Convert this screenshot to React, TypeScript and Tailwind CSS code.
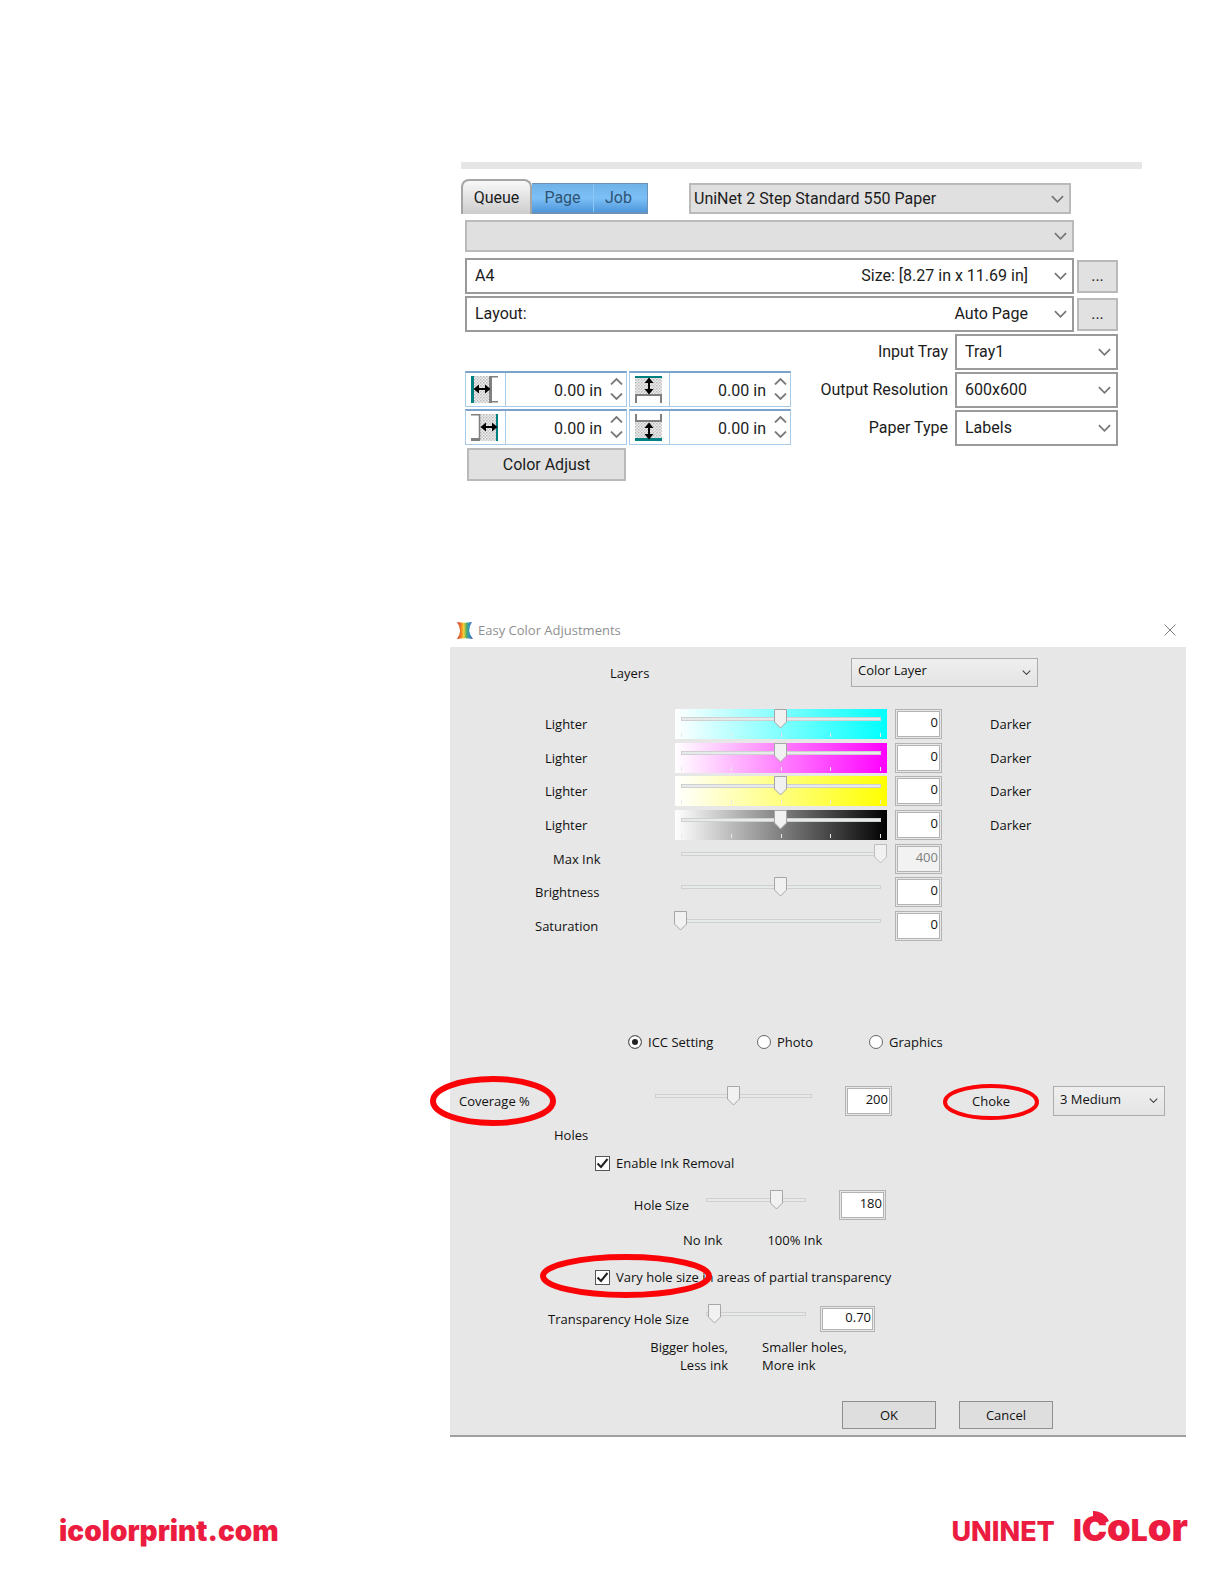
import { useState } from 'react';
import type { ReactNode } from 'react';

function Chevron({ className = '' }: { className?: string }) {
  return (
    <svg
      className={`pointer-events-none absolute ${className}`}
      fill="none"
      stroke="currentColor"
      strokeWidth={1.8}
      viewBox="0 0 14 8"
    >
      <path d="M1 1l6 6 6-6" />
    </svg>
  );
}

interface ComboProps {
  label: string;
  value: string;
  className?: string;
  detail?: string;
  disabled?: boolean;
}

function Combo({ label, value, className = '', detail, disabled = false }: ComboProps) {
  return (
    <div className={`relative flex items-center ${className}`}>
      <select
        aria-label={label}
        disabled={disabled}
        className="h-full w-full min-w-0 flex-1 appearance-none bg-transparent outline-none"
      >
        <option>{value}</option>
      </select>
      {detail && <span className="mr-[44px] shrink-0">{detail}</span>}
      <Chevron className="right-[5px] h-[8px] w-[13px] text-[#747474]" />
    </div>
  );
}

type Side = 'left' | 'right' | 'top' | 'bottom';

function MarginIcon({ side }: { side: Side }) {
  const vertical = side === 'top' || side === 'bottom';
  return (
    <svg className="h-[27px] w-[27px]" viewBox="0 0 27 27" fill="none">
      <defs>
        <pattern id={`dots-${side}`} width="3" height="3" patternUnits="userSpaceOnUse">
          <rect width="3" height="3" fill="#efefef" />
          <rect width="1.5" height="1.5" fill="#b9b9b9" />
          <rect x="1.5" y="1.5" width="1.5" height="1.5" fill="#c9c9c9" />
        </pattern>
      </defs>
      {side === 'left' && (
        <>
          <rect x="3" width="15" height="27" fill={`url(#dots-${side})`} />
          <path d="M1.5 0v27" stroke="#008080" strokeWidth="3" />
          <path d="M27 .75h-7.500v25h7.500" stroke="#808080" strokeWidth="1.500" />
          <path d="M19.500 0v27" stroke="#808080" strokeWidth="3" />
        </>
      )}
      {side === 'right' && (
        <>
          <rect x="9" width="16" height="27" fill={`url(#dots-${side})`} />
          <path d="M26 0v27" stroke="#008080" strokeWidth="2" />
          <path d="M0 .75h8.500v25" stroke="#808080" strokeWidth="1.500" />
          <path d="M0 25.500h9" stroke="#808080" strokeWidth="3" />
        </>
      )}
      {side === 'top' && (
        <>
          <rect width="27" height="18" fill={`url(#dots-${side})`} />
          <path d="M0 1h27" stroke="#008080" strokeWidth="2" />
          <path d="M1 27v-8h25v8" stroke="#808080" strokeWidth="2" />
        </>
      )}
      {side === 'bottom' && (
        <>
          <rect y="8" width="27" height="17" fill={`url(#dots-${side})`} />
          <path d="M0 25.5h27" stroke="#008080" strokeWidth="3" />
          <path d="M1 0v7h25V0" stroke="#808080" strokeWidth="2" />
        </>
      )}
      {vertical ? (
        <g transform={side === 'top' ? 'translate(14 10)' : 'translate(14 17)'} fill="#000">
          <rect x="-1" y="-6" width="2" height="12" />
          <path d="M-4.500-3L0-8.500 4.500-3zM-4.500 3L0 8.500 4.500 3z" />
        </g>
      ) : (
        <g transform={side === 'left' ? 'translate(11 13)' : 'translate(18 13)'} fill="#000">
          <rect x="-6" y="-1" width="12" height="2" />
          <path d="M-3-4.500L-8.500 0-3 4.500zM3-4.500L8.500 0 3 4.500z" />
        </g>
      )}
    </svg>
  );
}

function MarginField({ side }: { side: Side }) {
  const [value, setValue] = useState('0.00 in');
  return (
    <div className="flex h-9 w-[162px] border border-[#a9cbea] border-t-2 border-t-[#7ba2c8] bg-white">
      <div className="flex w-10 shrink-0 items-center justify-center border-r border-[#a9cbea] pr-[2px]">
        <MarginIcon side={side} />
      </div>
      <input
        aria-label={`${side} margin`}
        value={value}
        onChange={(e) => setValue(e.target.value)}
        className="w-full min-w-0 flex-1 pt-[2px] text-right outline-none"
      />
      <div className="flex w-6 shrink-0 flex-col items-center justify-center gap-[8px] pb-[2px] pl-[5px] text-[#7a7a7a]">
        <button type="button" aria-label={`Increase ${side} margin`} className="block">
          <svg className="block h-[7px] w-[13px]" viewBox="0 0 13 7" fill="none" stroke="currentColor" strokeWidth={1.8}>
            <path d="M1 6.500l5.500-5.500 5.500 5.500" />
          </svg>
        </button>
        <button type="button" aria-label={`Decrease ${side} margin`} className="block">
          <svg className="block h-[7px] w-[13px]" viewBox="0 0 13 7" fill="none" stroke="currentColor" strokeWidth={1.8}>
            <path d="M1 .5l5.500 5.500 5.500-5.500" />
          </svg>
        </button>
      </div>
    </div>
  );
}

const trays = [
  { label: 'Input Tray', value: 'Tray1' },
  { label: 'Output Resolution', value: '600x600' },
  { label: 'Paper Type', value: 'Labels' },
];

const grayCombo = 'border-2 border-[#bababa] bg-[#e0e0e0]';
const whiteCombo = 'border-2 border-[#9a9a9a] bg-white';
const grayButton = 'border-2 border-[#b9b9b9] bg-[#e1e1e1]';

function QueuePanel() {
  return (
    <section className="pr-[82px] pl-[461px] font-[Roboto,sans-serif] text-[16px] text-[#1c1c1c]">
      <div className="h-[7px] bg-[#e6e6e6]" />
      <div className="mt-[10px] flex items-end pr-[71px]">
        <div className="flex items-end" role="tablist">
          <button
            type="button"
            role="tab"
            aria-selected
            className="h-[35px] w-[71px] rounded-t-lg border-2 border-b-0 border-[#a5a5a5] bg-linear-to-b from-[#f8f8f8] to-[#cdcdcd]"
          >
            Queue
          </button>
          <div className="flex h-[31px] border-t border-r border-b-2 border-[#6c92b5] bg-linear-to-b from-[#6fb2e8] via-[#7cc0f7] to-[#4f97dc] text-[#2f5373]">
            <button type="button" role="tab" className="w-[62px] border-r border-[#8cc8f6]">
              Page
            </button>
            <button type="button" role="tab" className="w-[53px] pr-1">
              Job
            </button>
          </div>
        </div>
        <Combo
          label="Queue"
          value="UniNet 2 Step Standard 550 Paper"
          className={`ml-[41px] h-[31px] flex-1 pl-[3px] ${grayCombo}`}
        />
      </div>
      <div className="pr-6 pl-1">
        <Combo label="Preset" value="" disabled className={`mt-[6px] mr-11 h-8 ${grayCombo}`} />
        <div className="mt-[6px] flex items-center gap-[3px]">
          <Combo
            label="Paper"
            value="A4"
            detail="Size: [8.27 in x 11.69 in]"
            className={`h-9 flex-1 pl-2 ${whiteCombo}`}
          />
          <button type="button" aria-label="Paper options" className={`h-[33px] w-[41px] ${grayButton}`}>
            ...
          </button>
        </div>
        <div className="mt-[2px] flex items-center gap-[3px]">
          <Combo label="Layout" value="Layout:" detail="Auto Page" className={`h-9 flex-1 pl-2 ${whiteCombo}`} />
          <button type="button" aria-label="Layout options" className={`h-[33px] w-[41px] ${grayButton}`}>
            ...
          </button>
        </div>
        <div className="mt-[2px] flex justify-between">
          <div className="pt-[37px]">
            <div className="grid grid-cols-2 gap-[2px]">
              <MarginField side="left" />
              <MarginField side="top" />
              <MarginField side="right" />
              <MarginField side="bottom" />
            </div>
            <button type="button" className={`mt-[3px] ml-[2px] h-[33px] w-[159px] ${grayButton}`}>
              Color Adjust
            </button>
          </div>
          <div className="flex flex-col gap-[2px]">
            {trays.map((tray) => (
              <div key={tray.label} className="flex items-center justify-end gap-[7px]">
                <span>{tray.label}</span>
                <Combo label={tray.label} value={tray.value} className={`h-9 w-[163px] pl-2 ${whiteCombo}`} />
              </div>
            ))}
          </div>
        </div>
      </div>
    </section>
  );
}

interface SliderProps {
  label: string;
  value: number;
  min?: number;
  max: number;
  onChange: (value: number) => void;
  disabled?: boolean;
  ticks?: boolean;
  className?: string;
}

function Slider({ label, value, min = 0, max, onChange, disabled, ticks, className = '' }: SliderProps) {
  const percent = ((value - min) / (max - min)) * 100;
  return (
    <div className={`relative h-[30px] shrink-0 px-[6px] ${className}`}>
      <div className="relative h-full">
        <div className="absolute inset-x-0 top-[8px] h-[4px] border border-[#d0d0d0] bg-[#e7eaea]" />
        {ticks && (
          <div className="absolute inset-x-0 bottom-[2px] flex justify-between">
            {[0, 1, 2, 3, 4].map((tick) => (
              <span key={tick} className="h-[4px] w-px bg-[#e8e8e8]" />
            ))}
          </div>
        )}
        <svg
          className="absolute top-0 -ml-[7px] h-[20px] w-[13px]"
          style={{ left: `${percent}%` }}
          viewBox="0 0 13 20"
          fill="#f1f1f1"
          stroke={disabled ? '#bdbdbd' : '#a6a6a6'}
        >
          <path d="M.5 .5h12v12.500l-6 6-6-6z" />
        </svg>
      </div>
      <input
        type="range"
        aria-label={label}
        min={min}
        max={max}
        step="any"
        value={value}
        disabled={disabled}
        onChange={(e) => onChange(Number(e.target.value))}
        className="absolute inset-0 h-full w-full opacity-0"
      />
    </div>
  );
}

function NumberBox({ label, value, className = '', disabled = false }: {
  label: string;
  value: string;
  className?: string;
  disabled?: boolean;
}) {
  return (
    <input
      aria-label={label}
      value={value}
      readOnly
      disabled={disabled}
      className={`shrink-0 border-3 border-double border-[#b3b3b3] bg-clip-padding pr-px pb-[4px] text-right outline-none ${disabled ? 'bg-[#f2f2f2] text-[#808080]' : 'bg-white'} ${className}`}
    />
  );
}

function DialogSelect({ label, value, className = '' }: { label: string; value: string; className?: string }) {
  return (
    <div className={`relative border border-[#acacac] bg-linear-to-b from-[#efefef] to-[#e4e4e4] ${className}`}>
      <select aria-label={label} className="h-full w-full appearance-none pb-[5px] pl-[6px] outline-none">
        <option>{value}</option>
      </select>
      <Chevron className="top-[11px] right-[6px] h-[5px] w-[9px] text-[#444]" />
    </div>
  );
}

function Ellipse({ className, strokeWidth }: { className: string; strokeWidth: number }) {
  return (
    <svg
      className={`pointer-events-none absolute overflow-visible text-[#fb0408] ${className}`}
      viewBox="0 0 100 100"
      preserveAspectRatio="none"
      fill="none"
      stroke="currentColor"
      strokeWidth={strokeWidth}
    >
      <ellipse cx="50" cy="50" rx="50" ry="50" vectorEffect="non-scaling-stroke" />
    </svg>
  );
}

function Check({ defaultChecked, children }: { defaultChecked?: boolean; children: ReactNode }) {
  return (
    <label className="flex h-5 items-center gap-[6px]">
      <span className="relative h-[15px] w-[15px]">
        <input
          type="checkbox"
          defaultChecked={defaultChecked}
          className="peer block h-[15px] w-[15px] appearance-none border border-[#555] bg-white"
        />
        <svg
          className="pointer-events-none absolute inset-0 hidden h-[15px] w-[15px] peer-checked:block"
          viewBox="0 0 15 15"
          fill="none"
          stroke="#222"
          strokeWidth={2}
        >
          <path d="M2.500 7.500L6 11l6.500-8" />
        </svg>
      </span>
      {children}
    </label>
  );
}

function Radio({ children, defaultChecked, className = '' }: {
  children: ReactNode;
  defaultChecked?: boolean;
  className?: string;
}) {
  return (
    <label className={`flex items-center gap-[6px] ${className}`}>
      <input
        type="radio"
        name="intent"
        defaultChecked={defaultChecked}
        className="h-[14px] w-[14px] appearance-none rounded-full border border-[#666] bg-white checked:bg-[#222] checked:shadow-[inset_0_0_0_3px_white]"
      />
      {children}
    </label>
  );
}

const adjustments = [
  { id: 'cyan', label: 'Lighter', pad: 'pl-[95px]', bar: 'bg-linear-to-r/srgb from-white to-[#00ffff]', value: 0, min: -100, max: 100, dark: true },
  { id: 'magenta', label: 'Lighter', pad: 'pl-[95px]', bar: 'bg-linear-to-r/srgb from-white to-[#ff00ff]', value: 0, min: -100, max: 100, dark: true },
  { id: 'yellow', label: 'Lighter', pad: 'pl-[95px]', bar: 'bg-linear-to-r/srgb from-white to-[#ffff00]', value: 0, min: -100, max: 100, dark: true },
  { id: 'black', label: 'Lighter', pad: 'pl-[95px]', bar: 'bg-linear-to-r/srgb from-white to-black', value: 0, min: -100, max: 100, dark: true },
  { id: 'maxink', label: 'Max Ink', pad: 'pl-[103px]', bar: '', value: 400, min: 0, max: 400, disabled: true },
  { id: 'brightness', label: 'Brightness', pad: 'pl-[85px]', bar: '', value: 0, min: -100, max: 100 },
  { id: 'saturation', label: 'Saturation', pad: 'pl-[85px]', bar: '', value: 0, min: 0, max: 100 },
];

function AdjustmentRow({ item }: { item: (typeof adjustments)[number] }) {
  const [value, setValue] = useState(item.value);
  return (
    <div className="flex items-center">
      <span className={`w-[225px] shrink-0 ${item.pad}`}>{item.label}</span>
      <Slider
        label={item.id}
        value={value}
        min={item.min}
        max={item.max}
        onChange={setValue}
        disabled={item.disabled}
        ticks={item.dark}
        className={`w-[212px] ${item.bar}`}
      />
      <NumberBox
        label={`${item.id} value`}
        value={String(Math.round(value))}
        disabled={item.disabled}
        className="ml-2 h-[30px] w-[47px]"
      />
      {item.dark && <span className="ml-12">Darker</span>}
    </div>
  );
}

function AppIcon() {
  return (
    <svg className="h-[17px] w-[16px]" viewBox="0 0 16 17">
      <defs>
        <linearGradient id="rainbow">
          <stop offset="0" stopColor="#c8352c" />
          <stop offset=".25" stopColor="#ef7d22" />
          <stop offset=".42" stopColor="#f3d33a" />
          <stop offset=".6" stopColor="#4fae6a" />
          <stop offset=".78" stopColor="#2f8fc4" />
          <stop offset="1" stopColor="#4a4a9c" />
        </linearGradient>
      </defs>
      <path d="M0 0q8 1.500 15 0-6 8.500 1 17-8-1.500-16 0 6-8.500 0-17z" fill="url(#rainbow)" />
    </svg>
  );
}

function ColorDialog() {
  const [coverage, setCoverage] = useState(200);
  const [holeSize, setHoleSize] = useState(180);
  const [transparency, setTransparency] = useState(0.7);

  return (
    <section className="mt-[132px] pr-[38px] pl-[450px] font-['Open_Sans',sans-serif] text-[13px] leading-5 text-[#111]">
      <div className="flex h-[34px] items-center pr-[10px] pl-[7px]">
        <AppIcon />
        <h1 className="ml-[5px] flex-1 text-[#8f8f8f]">Easy Color Adjustments</h1>
        <button type="button" aria-label="Close">
          <svg className="h-[12px] w-[12px]" viewBox="0 0 12 12" stroke="#808080">
            <path d="M.5 .5l11 11M11.500 .5l-11 11" />
          </svg>
        </button>
      </div>
      <div className="border-b-2 border-[#a0a0a0] bg-[#e7e7e7] pt-[11px] pb-[6px]">
        <div className="flex items-center pl-[160px]">
          <span className="w-[241px]">Layers</span>
          <DialogSelect label="Layers" value="Color Layer" className="h-[29px] w-[187px]" />
        </div>

        <div className="mt-[22px] flex h-[232px] flex-col justify-between">
          {adjustments.map((item) => (
            <AdjustmentRow key={item.id} item={item} />
          ))}
        </div>

        <div className="mt-[91px] flex h-5 pl-[178px]">
          <Radio defaultChecked className="w-[129px]">ICC Setting</Radio>
          <Radio className="w-[112px]">Photo</Radio>
          <Radio>Graphics</Radio>
        </div>

        <div className="mt-[34px] flex items-center pl-[9px]">
          <div className="relative w-[190px]">
            Coverage %
            <Ellipse className="-top-[12px] -left-[26px] h-[44px] w-[120px]" strokeWidth={6} />
          </div>
          <Slider label="Coverage" value={coverage} max={400} onChange={setCoverage} className="w-[169px]" />
          <NumberBox label="Coverage value" value={String(Math.round(coverage))} className="ml-[27px] h-[30px] w-[47px]" />
          <div className="relative ml-[80px] w-[81px]">
            Choke
            <Ellipse className="-top-[5px] -left-[27px] h-[32px] w-[92px]" strokeWidth={4} />
          </div>
          <DialogSelect label="Choke" value="3 Medium" className="h-[30px] w-[112px]" />
        </div>

        <h2 className="mt-[9px] pl-[104px]">Holes</h2>
        <div className="mt-2 pl-[145px]">
          <Check defaultChecked>Enable Ink Removal</Check>
        </div>

        <div className="mt-[17px] flex items-center">
          <span className="w-[250px] pr-[11px] text-right">Hole Size</span>
          <Slider label="Hole size" value={holeSize} max={255} onChange={setHoleSize} className="w-[112px]" />
          <NumberBox label="Hole size value" value={String(Math.round(holeSize))} className="ml-[27px] h-[30px] w-[47px]" />
        </div>
        <div className="mt-[10px] flex gap-[45px] pl-[233px]">
          <span>No Ink</span>
          <span>100% Ink</span>
        </div>

        <div className="relative mt-[17px] pl-[145px]">
          <Check defaultChecked>Vary hole size in areas of partial transparency</Check>
          <Ellipse className="-top-[10px] left-[93px] h-[38px] w-[166px]" strokeWidth={6} />
        </div>

        <div className="mt-[17px] flex items-center">
          <span className="w-[250px] pr-[11px] text-right">Transparency Hole Size</span>
          <Slider
            label="Transparency hole size"
            value={transparency}
            max={8}
            onChange={setTransparency}
            className="w-[112px]"
          />
          <NumberBox label="Transparency hole size value" value={transparency.toFixed(2)} className="ml-2 h-[26px] w-[55px]" />
        </div>
        <div className="mt-1 flex gap-[34px] leading-[18px]">
          <p className="w-[278px] text-right">
            Bigger holes,
            <br />
            Less ink
          </p>
          <p>
            Smaller holes,
            <br />
            More ink
          </p>
        </div>

        <div className="mt-[27px] flex gap-[23px] pl-[392px]">
          <button type="button" className="h-[28px] w-[94px] border border-[#8f8f8f] bg-[#dedede]">
            OK
          </button>
          <button type="button" className="h-[28px] w-[94px] border border-[#8f8f8f] bg-[#dedede]">
            Cancel
          </button>
        </div>
      </div>
    </section>
  );
}

export default function App() {
  return (
    <div className="min-h-screen bg-white pt-[162px]">
      <QueuePanel />
      <ColorDialog />
      <footer className="mt-[70px] flex h-[52px] items-baseline pr-9 pl-[59px] font-[Inter,sans-serif] text-[#ec1c40]">
        <a href="#" className="flex-1 text-[28px] font-black">
          icolorprint.com
        </a>
        <span className="text-[27px] font-extrabold">UNINET</span>
        <span className="ml-[18px] text-[30px] leading-[40px] font-black">
          I
          <span className="relative text-[34px]">
            C
            {/* raised segment of the ring */}
            <svg className="absolute top-[3px] -right-[2px] h-[14px] w-[16px]" viewBox="0 0 16 14" fill="currentColor">
              <path d="M0 0A17 17 0 0 1 16 10L8 14A9 9 0 0 0 0 8.500z" />
            </svg>
          </span>
          <span className="text-[38px]">o</span>L<span className="text-[38px]">or</span>
        </span>
      </footer>
    </div>
  );
}
